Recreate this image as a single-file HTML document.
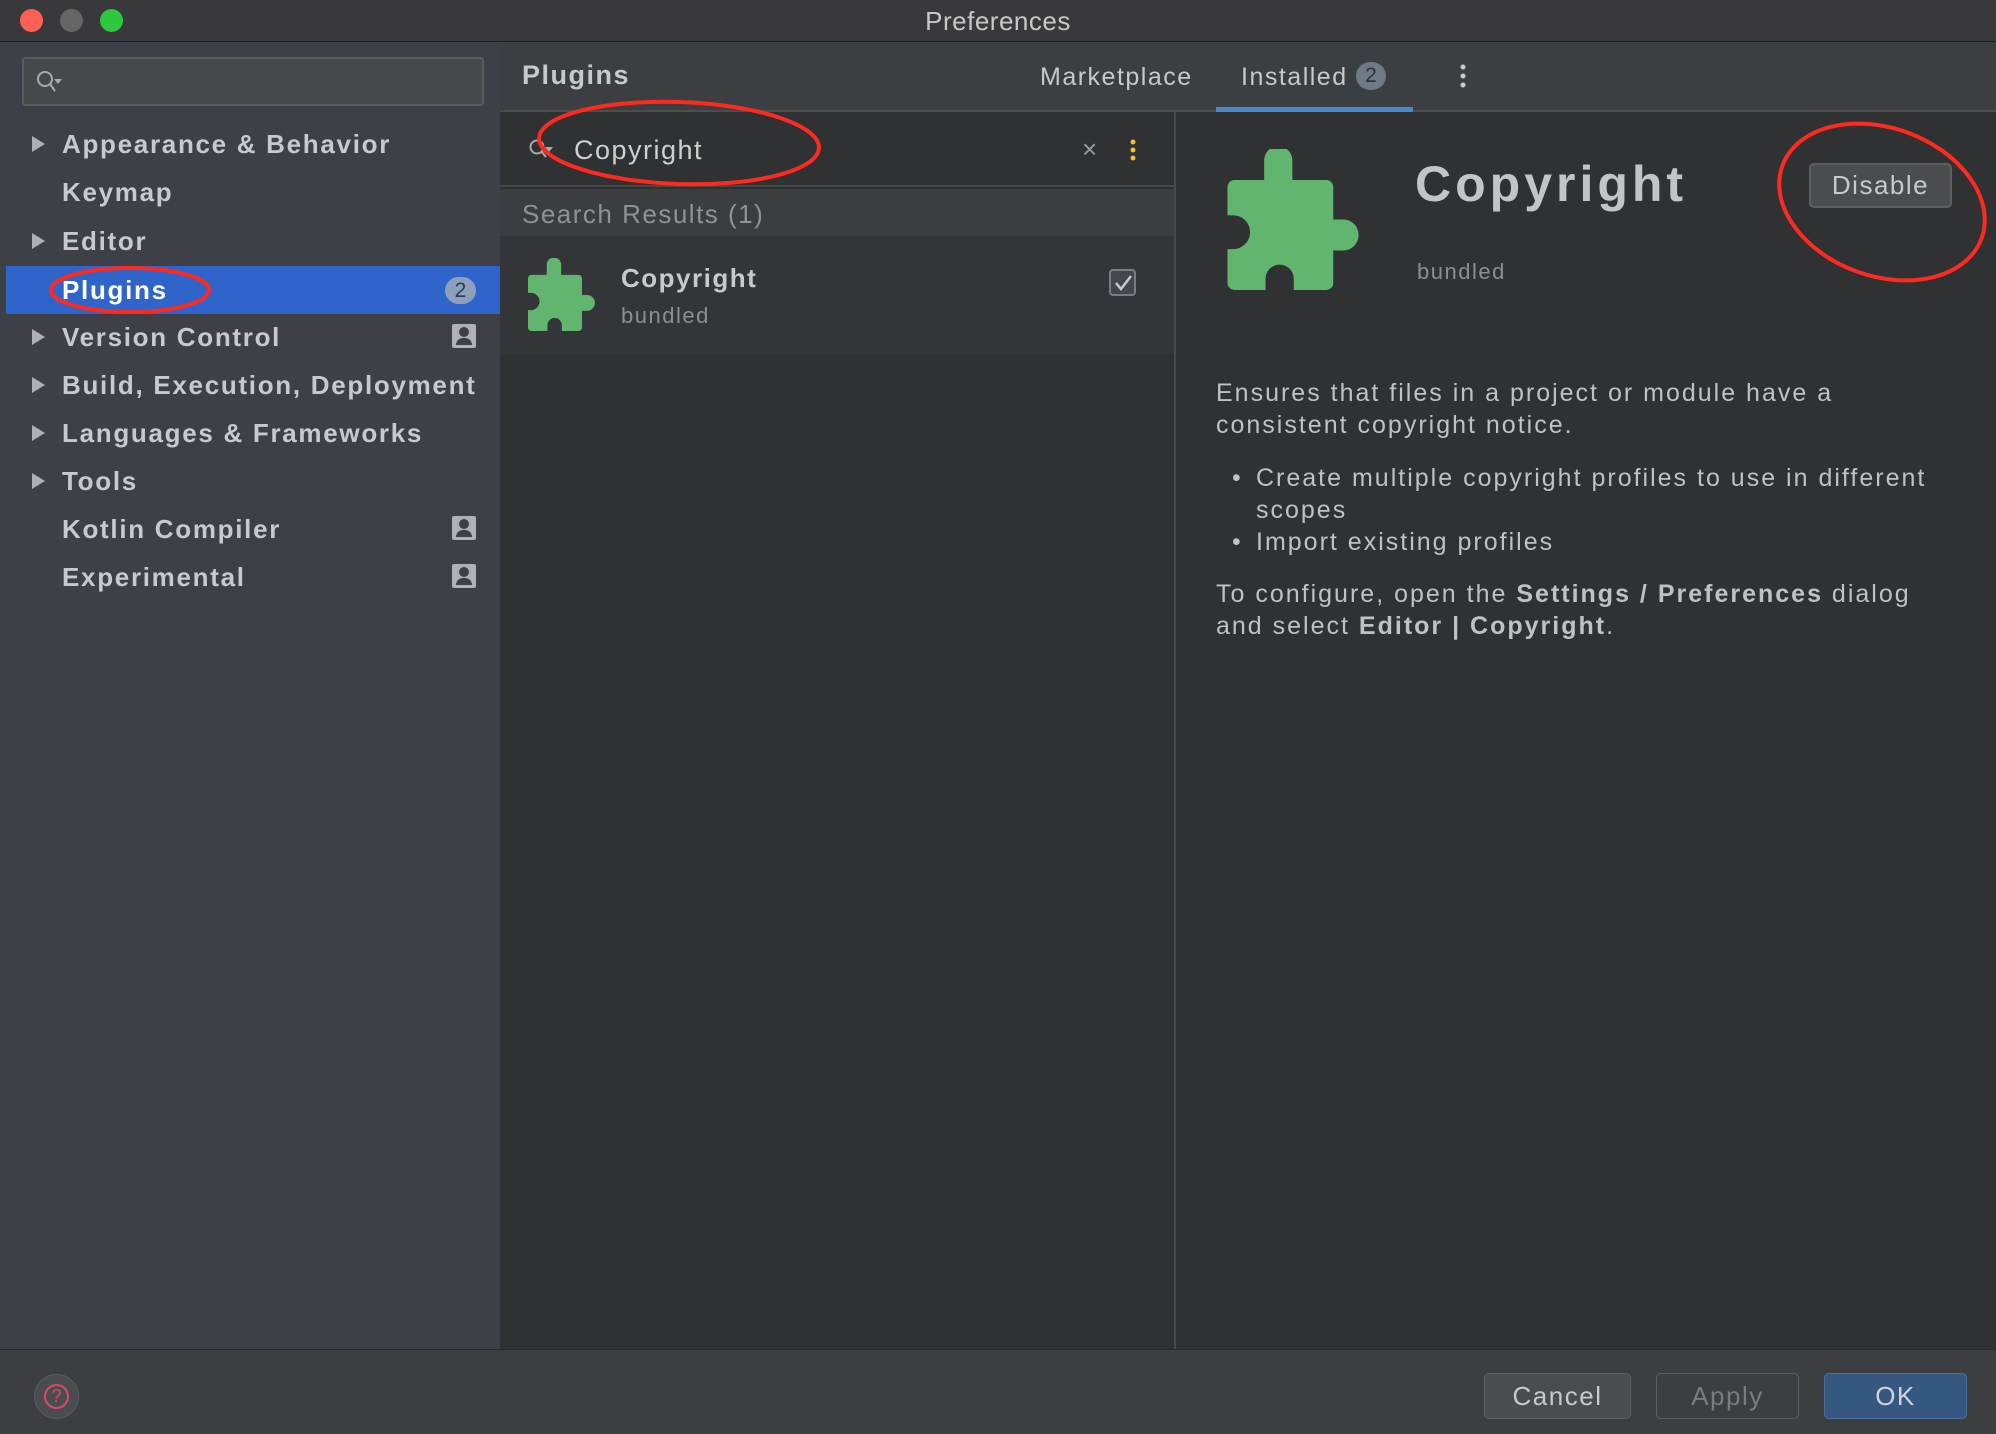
<!DOCTYPE html>
<html><head><meta charset="utf-8"><style>
*{margin:0;padding:0;box-sizing:border-box}
body{width:1996px;height:1434px;overflow:hidden;background:#2f3133;font-family:"Liberation Sans",sans-serif;position:relative;color:#bbbbbb;letter-spacing:1.5px}
.a{position:absolute}
.title{left:0;top:0;width:1996px;height:42px;background:#39393b;border-bottom:1px solid #1e1e1e;text-align:center;line-height:42px;font-size:26px;color:#c8c8c8;letter-spacing:0.5px}
.dot{top:9px;width:23px;height:23px;border-radius:50%}
.side{left:0;top:42px;width:500px;height:1307px;background:#3d4047}
.item{left:62px;font-size:26px;font-weight:bold;color:#c7c9cc;height:48px;line-height:48px;letter-spacing:1.7px}
.arr{left:32px;width:0;height:0;border-left:13px solid #aeb0b3;border-top:8px solid transparent;border-bottom:8px solid transparent}
.usr{left:452px;width:24px;height:24px;background:#aeb1b5;border-radius:2px}
.usr:before{content:"";position:absolute;left:7px;top:3px;width:10px;height:10px;border-radius:50%;background:#3d4047}
.usr:after{content:"";position:absolute;left:4px;top:14px;width:16px;height:7px;border-radius:8px 8px 0 0;background:#3d4047}
.btn{top:1373px;height:46px;border-radius:5px;font-size:26px;text-align:center;line-height:44px;border:1px solid #5e6060}
.d{font-size:25px;line-height:32px;color:#bfc1c3;letter-spacing:2px}
</style></head><body>
<div class="a title">Preferences</div>
<div class="a dot" style="left:20px;background:#fe5f57"></div>
<div class="a dot" style="left:60px;background:#666"></div>
<div class="a dot" style="left:100px;background:#2bc840"></div>

<div class="a side"></div>
<div class="a" style="left:22px;top:57px;width:462px;height:49px;background:#45494a;border:2px solid #5a5d60;border-radius:4px"></div>
<svg class="a" style="left:34px;top:68px" width="32" height="30"><circle cx="11" cy="11" r="7" fill="none" stroke="#aaa" stroke-width="2"/><line x1="16" y1="16" x2="21" y2="23" stroke="#aaa" stroke-width="2"/><path d="M20 11 h8 l-4 5z" fill="#aaa"/></svg>

<div class="a" style="left:6px;top:266px;width:494px;height:48px;background:#2f65ca"></div>
<div class="a arr" style="top:136px"></div><div class="a item" style="top:120px">Appearance &amp; Behavior</div>
<div class="a item" style="top:168px">Keymap</div>
<div class="a arr" style="top:233px"></div><div class="a item" style="top:217px">Editor</div>
<div class="a item" style="top:266px;color:#fff">Plugins</div>
<div class="a" style="left:445px;top:277px;width:31px;height:27px;border-radius:14px;background:#8ca0bd;color:#2d3a55;font-size:21px;text-align:center;line-height:27px;letter-spacing:0">2</div>
<div class="a arr" style="top:329px"></div><div class="a item" style="top:313px">Version Control</div><div class="a usr" style="top:324px"></div>
<div class="a arr" style="top:377px"></div><div class="a item" style="top:361px">Build, Execution, Deployment</div>
<div class="a arr" style="top:425px"></div><div class="a item" style="top:409px">Languages &amp; Frameworks</div>
<div class="a arr" style="top:473px"></div><div class="a item" style="top:457px">Tools</div>
<div class="a item" style="top:505px">Kotlin Compiler</div><div class="a usr" style="top:516px"></div>
<div class="a item" style="top:553px">Experimental</div><div class="a usr" style="top:564px"></div>

<div class="a" style="left:500px;top:42px;width:1496px;height:70px;background:#3c3f41;border-bottom:2px solid #4b4d4f"></div>
<div class="a" style="left:522px;top:60px;font-size:27px;font-weight:bold;color:#c7c9cc">Plugins</div>
<div class="a" style="left:1040px;top:63px;font-size:25px;color:#c7c9cc">Marketplace</div>
<div class="a" style="left:1241px;top:63px;font-size:25px;color:#c7c9cc">Installed</div>
<div class="a" style="left:1356px;top:62px;width:30px;height:28px;border-radius:14px;background:#6e7a88;color:#2f3133;font-size:21px;text-align:center;line-height:28px;letter-spacing:0">2</div>
<div class="a" style="left:1216px;top:107px;width:197px;height:5px;background:#4a88c7"></div>
<svg class="a" style="left:1455px;top:62px" width="16" height="30"><circle cx="8" cy="5" r="2.5" fill="#ccc"/><circle cx="8" cy="14" r="2.5" fill="#ccc"/><circle cx="8" cy="23" r="2.5" fill="#ccc"/></svg>

<div class="a" style="left:500px;top:112px;width:674px;height:75px;background:#2f3133;border-bottom:2px solid #454749"></div>
<svg class="a" style="left:528px;top:138px" width="32" height="26"><circle cx="9" cy="9" r="6.5" fill="none" stroke="#aaa" stroke-width="2"/><line x1="13" y1="13" x2="18" y2="19" stroke="#aaa" stroke-width="2"/><path d="M17 9 h8 l-4 5z" fill="#aaa"/></svg>
<div class="a" style="left:574px;top:135px;font-size:27px;color:#d0d0d0">Copyright</div>
<div class="a" style="left:1082px;top:134px;font-size:26px;color:#9a9a9a">×</div>
<svg class="a" style="left:1125px;top:138px" width="16" height="28"><circle cx="8" cy="4" r="2.5" fill="#e8c43b"/><circle cx="8" cy="12" r="2.5" fill="#e8c43b"/><circle cx="8" cy="20" r="2.5" fill="#e8c43b"/></svg>

<div class="a" style="left:500px;top:189px;width:674px;height:47px;background:#3b3e41"></div>
<div class="a" style="left:522px;top:199px;font-size:26px;color:#8f9193">Search Results (1)</div>
<div class="a" style="left:500px;top:236px;width:674px;height:118px;background:#333538"></div>
<svg class="a" style="left:528px;top:258px" width="72" height="74" viewBox="0 0 100 100"><path d="M26 22 V8 a10 10 0 0 1 20 0 V22 H70 a5 5 0 0 1 5 5 V50 H82 a11 11 0 0 1 0 22 H75 V95 a5 5 0 0 1 -5 5 H47 V92 a10 10 0 0 0 -20 0 V100 H5 a5 5 0 0 1 -5 -5 V71 H4 a12 12 0 0 0 0 -24 H0 V27 a5 5 0 0 1 5 -5z" fill="#62b56e"/></svg>
<div class="a" style="left:621px;top:263px;font-size:26px;font-weight:bold;color:#c7c9cc">Copyright</div>
<div class="a" style="left:621px;top:303px;font-size:22px;color:#8c8e90">bundled</div>
<div class="a" style="left:1109px;top:269px;width:27px;height:27px;border:2px solid #7a7c7e;border-radius:4px;background:#43464a"></div>
<svg class="a" style="left:1112px;top:272px" width="22" height="22"><path d="M4 11 l5 6 l10 -13" fill="none" stroke="#c7c9cc" stroke-width="2.5"/></svg>

<div class="a" style="left:1174px;top:112px;width:2px;height:1237px;background:#46484a"></div>
<svg class="a" style="left:1226px;top:149px" width="144" height="141" viewBox="0 0 100 100"><path d="M26 22 V8 a10 10 0 0 1 20 0 V22 H70 a5 5 0 0 1 5 5 V50 H82 a11 11 0 0 1 0 22 H75 V95 a5 5 0 0 1 -5 5 H47 V92 a10 10 0 0 0 -20 0 V100 H5 a5 5 0 0 1 -5 -5 V71 H4 a12 12 0 0 0 0 -24 H0 V27 a5 5 0 0 1 5 -5z" fill="#62b56e"/></svg>
<div class="a" style="left:1415px;top:155px;font-size:50px;font-weight:bold;color:#c2c4c6;letter-spacing:4px">Copyright</div>
<div class="a" style="left:1417px;top:259px;font-size:22px;color:#8c8e90">bundled</div>
<div class="a" style="left:1809px;top:163px;width:143px;height:45px;background:#4a4d50;border:2px solid #5c5f62;border-radius:5px;font-size:26px;text-align:center;line-height:41px;color:#c7c9cc">Disable</div>

<div class="a d" style="left:1216px;top:377px;width:780px">Ensures that files in a project or module have a<br>consistent copyright notice.</div>
<div class="a d" style="left:1232px;top:462px">•</div>
<div class="a d" style="left:1256px;top:462px;width:740px">Create multiple copyright profiles to use in different<br>scopes</div>
<div class="a d" style="left:1232px;top:526px">•</div>
<div class="a d" style="left:1256px;top:526px">Import existing profiles</div>
<div class="a d" style="left:1216px;top:578px;width:780px">To configure, open the <b>Settings / Preferences</b> dialog<br>and select <b>Editor | Copyright</b>.</div>

<div class="a" style="left:0;top:1349px;width:1996px;height:85px;background:#3c3f41;border-top:1px solid #2b2b2b"></div>
<div class="a" style="left:34px;top:1374px;width:45px;height:45px;border-radius:50%;background:#4a4d50;border:1px solid #5a5d60"></div>
<div class="a" style="left:44px;top:1384px;width:25px;height:25px;border-radius:50%;border:2px solid #e0466a;color:#e0466a;font-size:18px;text-align:center;line-height:21px;letter-spacing:0">?</div>
<div class="a btn" style="left:1484px;width:147px;background:#4a4d50;color:#c7c9cc">Cancel</div>
<div class="a btn" style="left:1656px;width:143px;background:#3c3f41;color:#7a7c7e">Apply</div>
<div class="a btn" style="left:1824px;width:143px;background:#365880;border-color:#4a6f99;color:#d0d4da">OK</div>

<svg class="a" style="left:0;top:0" width="1996" height="1434">
<g fill="none" stroke="#ff2a1f" stroke-width="4">
<ellipse cx="679" cy="143" rx="140" ry="41" transform="rotate(2 679 143)"/>
<ellipse cx="130" cy="290" rx="79" ry="22"/>
<ellipse cx="1882" cy="202" rx="106" ry="74" transform="rotate(20 1882 202)"/>
</g></svg>
</body></html>
